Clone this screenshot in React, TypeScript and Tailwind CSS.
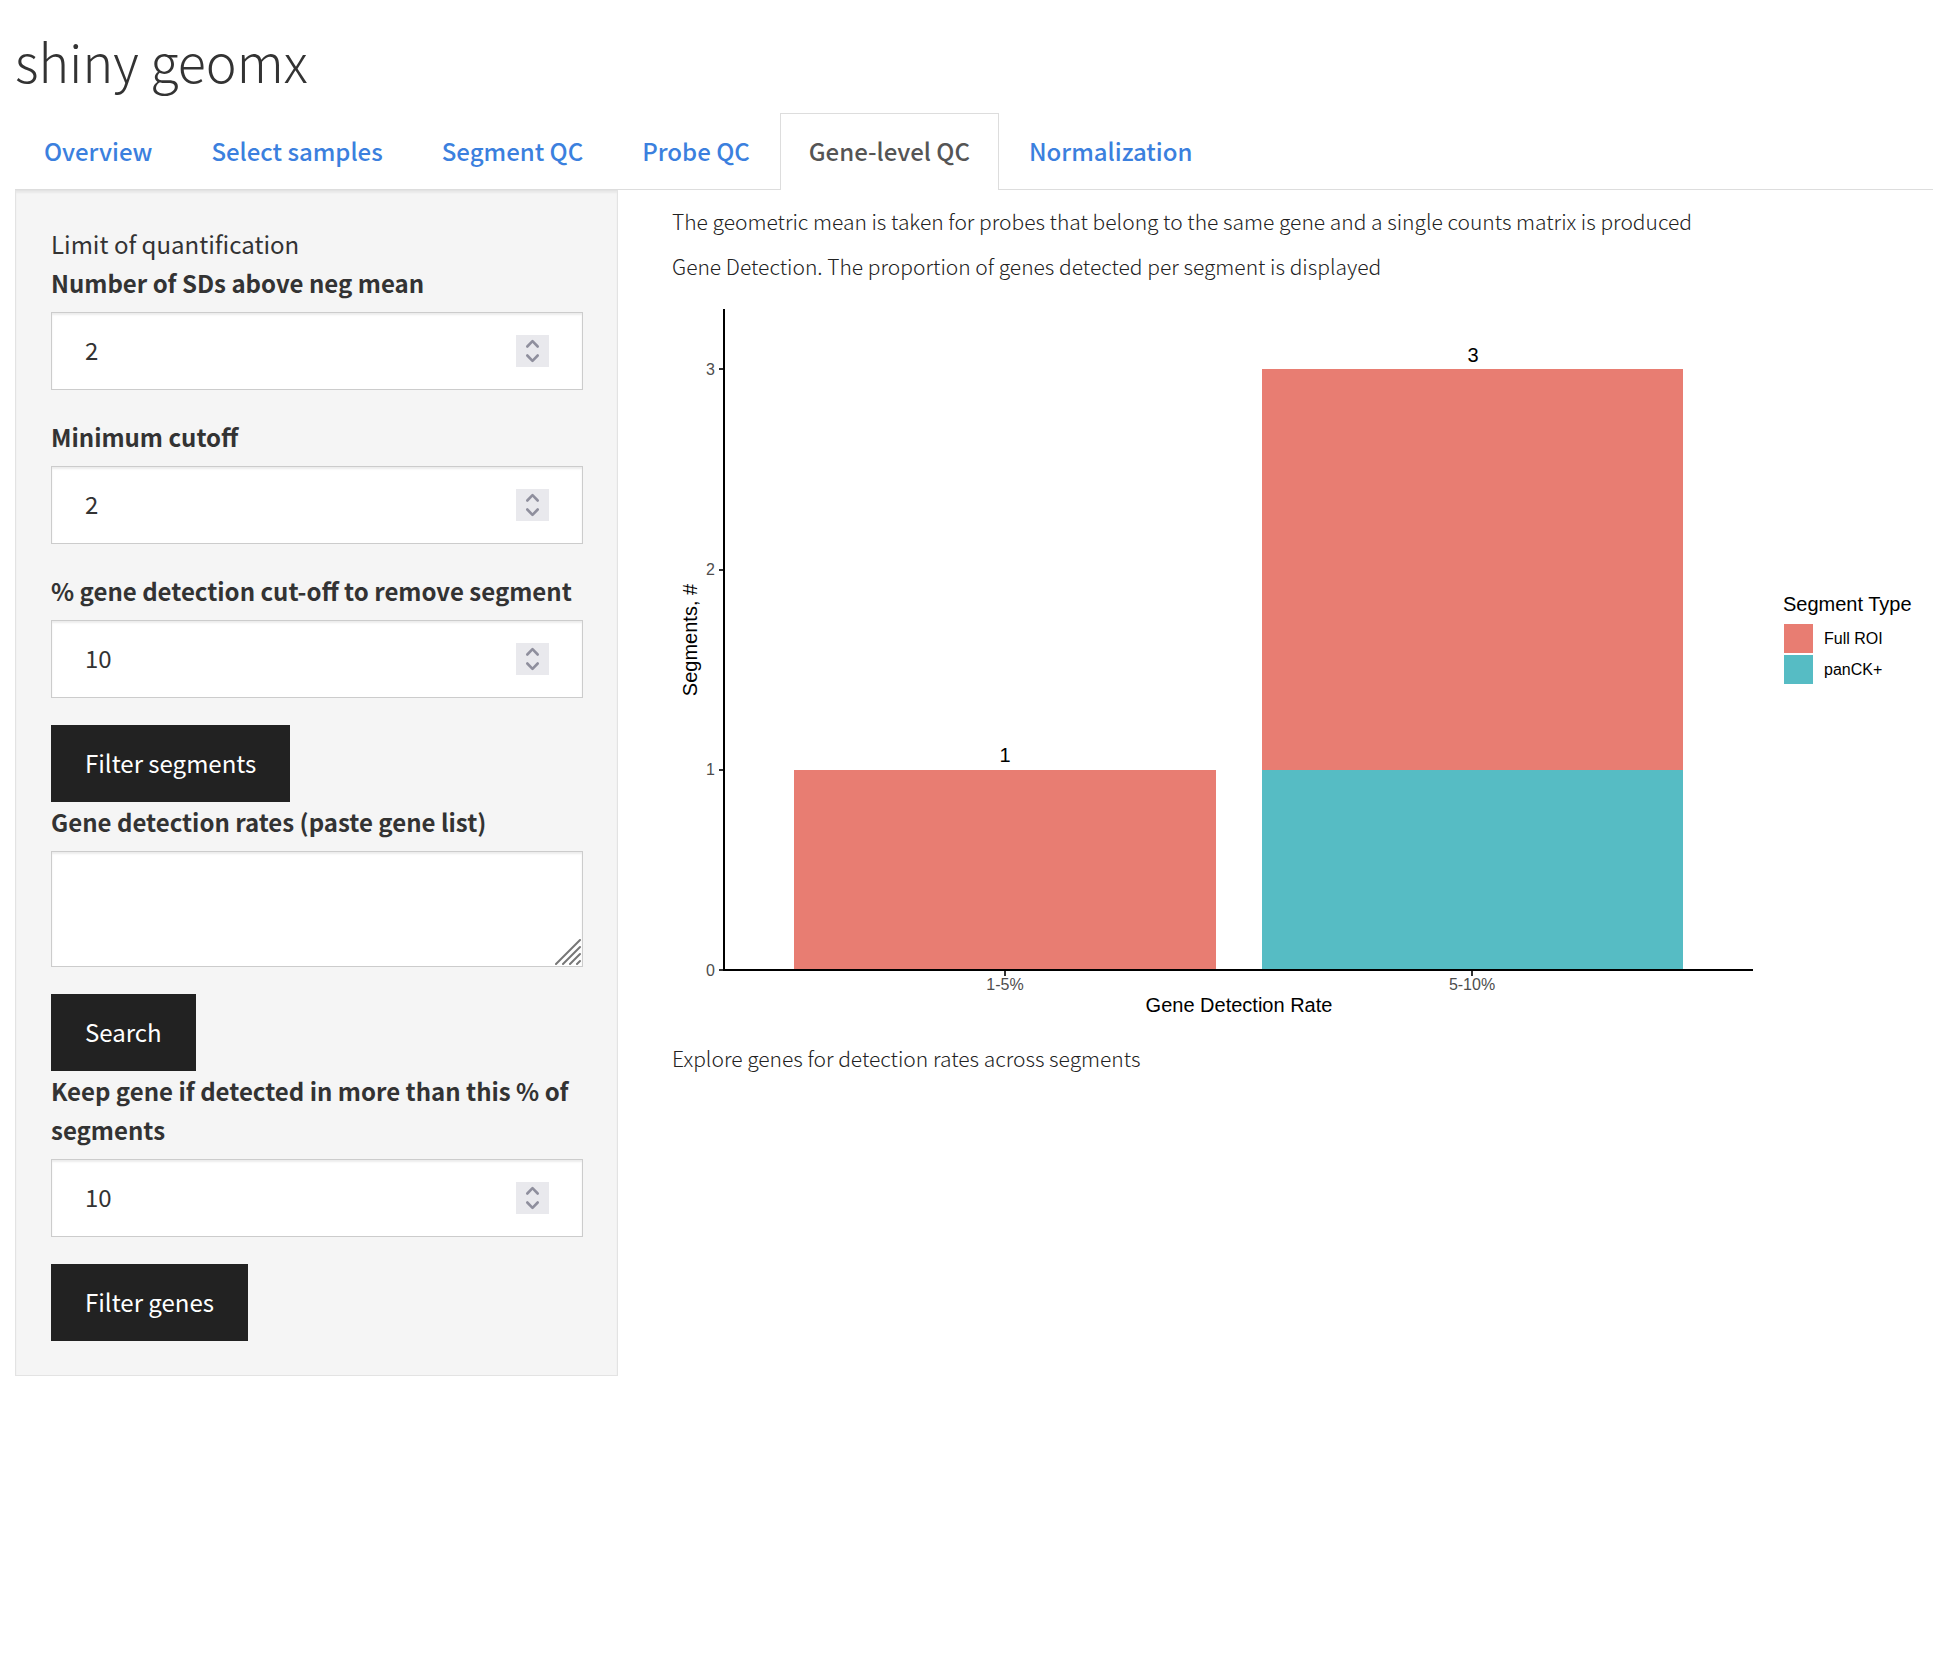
import { useState } from "react";

const tabs = ["Overview", "Select samples", "Segment QC", "Probe QC", "Gene-level QC", "Normalization"];

const labelClass = "mb-[10px] block text-2xl/[39px] font-bold";
const fieldClass =
  "block w-full rounded-none border border-[#cccccc] bg-white px-[33px] text-2xl text-[#333333] shadow-[inset_0_2px_2px_rgba(0,0,0,0.075)] outline-none";

function Spinner() {
  return (
    <svg
      className="pointer-events-none absolute top-[23px] right-[34px] h-8 w-[33px] bg-[#e9e9ed]"
      viewBox="0 0 33 32"
      fill="none"
      stroke="#8f8f9d"
      strokeWidth="2.6"
      strokeLinecap="round"
      strokeLinejoin="round"
      aria-hidden="true"
    >
      <path d="M11.3 11.5 16.5 6.2 21.7 11.5" />
      <path d="M11.3 20.5 16.5 25.8 21.7 20.5" />
    </svg>
  );
}

function NumberField({ id, label, initial }: { id: string; label: string; initial: string }) {
  const [value, setValue] = useState(initial);
  return (
    <div className="mb-[27px]">
      <label htmlFor={id} className={labelClass}>
        {label}
      </label>
      <div className="relative">
        <input
          id={id}
          type="number"
          value={value}
          onChange={(e) => setValue(e.target.value)}
          className={`${fieldClass} h-[78px] pb-[3px] [appearance:textfield] [&::-webkit-inner-spin-button]:appearance-none`}
        />
        <Spinner />
      </div>
    </div>
  );
}

function ActionButton({ children }: { children: string }) {
  return (
    <button type="button" className="block h-[77px] bg-[#222222] px-[34px] pb-[2px] text-2xl text-white">
      {children}
    </button>
  );
}

function Sidebar() {
  return (
    <form className="border border-[#e3e3e3] bg-[#f5f5f5] pt-[33px] pr-[34px] pb-[34px] pl-[35px] shadow-[inset_0_2px_2px_rgba(0,0,0,0.05)]">
      <div className="text-2xl/[39px]">Limit of quantification</div>
      <NumberField id="sds" label="Number of SDs above neg mean" initial="2" />
      <NumberField id="cutoff" label="Minimum cutoff" initial="2" />
      <NumberField id="segment-rate" label="% gene detection cut-off to remove segment" initial="10" />
      <ActionButton>Filter segments</ActionButton>
      <div className="mb-[27px]">
        <label htmlFor="genes" className={labelClass}>
          Gene detection rates (paste gene list)
        </label>
        <div className="relative">
          <textarea id="genes" className={`${fieldClass} h-[116px] resize-none py-4`} />
          <svg
            className="pointer-events-none absolute right-[2px] bottom-[2px] size-[26px]"
            viewBox="0 0 26 26"
            fill="none"
            stroke="#777777"
            strokeWidth="2"
            strokeLinecap="round"
            aria-hidden="true"
          >
            <path d="M1 25 25 1M8 25 25 8M15 25 25 15M22 25 25 22" />
          </svg>
        </div>
      </div>
      <ActionButton>Search</ActionButton>
      <NumberField id="gene-rate" label="Keep gene if detected in more than this % of segments" initial="10" />
      <ActionButton>Filter genes</ActionButton>
    </form>
  );
}

const RED = "#e87d72";
const TEAL = "#56bcc4";

function DetectionChart() {
  return (
    <svg
      viewBox="0 0 1261 730"
      className="block w-full font-['Liberation_Sans',sans-serif]"
      role="img"
      aria-label="Segments by gene detection rate"
    >
      <rect x="122" y="470" width="422" height="200" fill={RED} />
      <rect x="590" y="69" width="421" height="401" fill={RED} />
      <rect x="590" y="470" width="421" height="200" fill={TEAL} />

      <g stroke="#333333" strokeWidth="2">
        <path d="M47 69h5M47 270h5M47 470h5M47 670h5" />
        <path d="M333 670v6M800 670v6" />
      </g>
      <path d="M52 9V670H1081" fill="none" stroke="#000000" strokeWidth="2" />

      <g fontSize="16" fill="#4d4d4d">
        <g textAnchor="end">
          <text x="43" y="75">3</text>
          <text x="43" y="275">2</text>
          <text x="43" y="475">1</text>
          <text x="43" y="676">0</text>
        </g>
        <g textAnchor="middle">
          <text x="333" y="690">1-5%</text>
          <text x="800" y="690">5-10%</text>
        </g>
      </g>

      <g fontSize="20" fill="#000000" textAnchor="middle">
        <text x="333" y="462">1</text>
        <text x="801" y="62">3</text>
        <text x="567" y="712">Gene Detection Rate</text>
        <text transform="translate(25 340) rotate(-90)">Segments, #</text>
      </g>

      <text x="1111" y="311" fontSize="20" fill="#000000">
        Segment Type
      </text>
      <rect x="1112" y="324" width="29" height="29" fill={RED} />
      <rect x="1112" y="355" width="29" height="29" fill={TEAL} />
      <g fontSize="16" fill="#000000">
        <text x="1152" y="344">Full ROI</text>
        <text x="1152" y="375">panCK+</text>
      </g>
    </svg>
  );
}

export default function App() {
  const [active, setActive] = useState("Gene-level QC");
  return (
    <div className="min-h-screen bg-white pr-[19px] pl-[15px] font-['Noto_Sans_CJK_SC','Source_Sans_Pro',sans-serif] text-[#333333]">
      <h1 className="pt-[25px] pb-4 text-[52px]/[72px] font-light">shiny geomx</h1>

      <nav className="flex gap-px border-b border-[#dddddd]">
        {tabs.map((tab) => (
          <a
            key={tab}
            href="#"
            aria-current={tab === active ? "page" : undefined}
            onClick={(e) => {
              e.preventDefault();
              setActive(tab);
            }}
            className={
              tab === active
                ? "-mb-px border border-b-0 border-[#dddddd] bg-white px-7 pt-[17px] pb-5 text-2xl/[39px] font-medium text-[#555555]"
                : "border border-transparent px-7 pt-[17px] pb-[18px] text-2xl/[39px] font-medium text-[#3b80de]"
            }
          >
            {tab}
          </a>
        ))}
      </nav>

      <div className="grid grid-cols-[603fr_1261fr] items-start gap-[54px]">
        <Sidebar />
        <main className="pt-[13px] text-[21px]/9 font-light text-[#222222]">
          <p className="mb-[9px]">
            The geometric mean is taken for probes that belong to the same gene and a single counts matrix is produced
          </p>
          <p className="mb-4">Gene Detection. The proportion of genes detected per segment is displayed</p>
          <DetectionChart />
          <p className="mt-[10px]">Explore genes for detection rates across segments</p>
        </main>
      </div>
    </div>
  );
}
